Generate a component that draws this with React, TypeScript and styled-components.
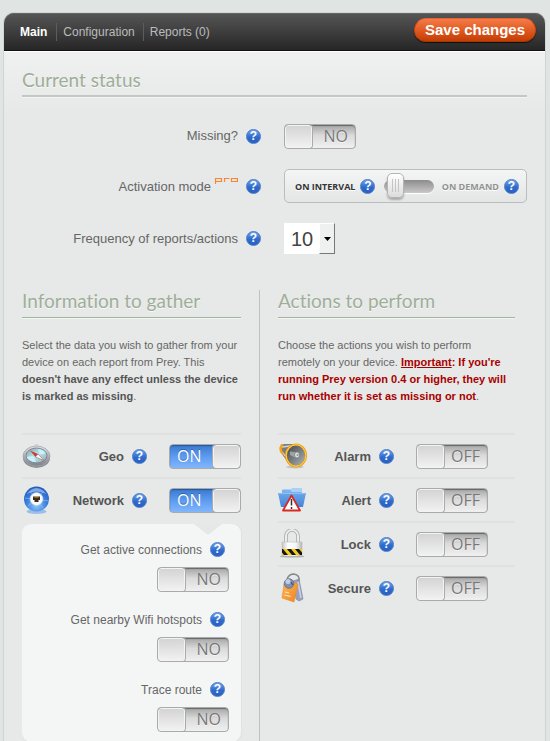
import React, { useState } from "react";
import styled, { createGlobalStyle, css } from "styled-components";

const GlobalStyle = createGlobalStyle`
  *, *::before, *::after { box-sizing: border-box; }
  html, body { margin: 0; padding: 0; }
  body {
    background: #e0e4e3;
    color: #666;
    font-family: "Liberation Sans", Arial, sans-serif;
    font-size: 12px;
  }
  h2, p, ul { margin: 0; padding: 0; }
  ul { list-style: none; }
  button, input, select { font: inherit; margin: 0; }
`;

const Page = styled.div`
  display: flex;
  min-height: 100vh;
  padding: 13px 5px 0 4px;
`;

const Panel = styled.main`
  display: flex;
  flex: 1;
  flex-direction: column;
  min-width: 0;
  border-radius: 10px 10px 0 0;
  background: #e7e9e8;
  box-shadow: 0 0 0 1px #d0d6d4;
`;

const Toolbar = styled.header`
  display: flex;
  align-items: center;
  justify-content: space-between;
  height: 38px;
  padding: 0 9px 0 16px;
  border-bottom: 1px solid #111;
  border-radius: 10px 10px 0 0;
  background: linear-gradient(#565656, #262626);
  box-shadow: inset 0 1px #666;
`;

const Tabs = styled.nav`
  display: flex;
  align-items: center;
`;

const Tab = styled.a<{ $current?: boolean }>`
  padding: 0 8px 0 6px;
  color: ${(p) => (p.$current ? "#fff" : "#bbb")};
  font-weight: ${(p) => (p.$current ? 700 : 400)};
  line-height: 18px;
  text-decoration: none;
  white-space: nowrap;

  &:first-child { padding: 0 9px 0 0; }
  & + & { border-left: 1px solid #5c5c5c; }
`;

const SaveButton = styled.button`
  height: 24px;
  margin-bottom: 4px;
  padding: 0 10px;
  border: 1px solid;
  border-color: #e8622c #c14612 #a83603;
  border-radius: 12px;
  background: linear-gradient(#f57c48, #e05a22 50%, #c33e04);
  box-shadow: 0 1px 1px #111;
  color: #fff;
  font-size: 15px;
  font-weight: 700;
  line-height: 20px;
  white-space: nowrap;
  cursor: pointer;
`;

const Body = styled.div`
  display: flex;
  flex: 1;
  flex-direction: column;
  padding: 17px 18px 0;
  border-top: 1px solid #fff;
  background: linear-gradient(#eff1f0, #e7e9e8 60px);
`;

const SectionTitle = styled.h2<{ $strong?: boolean }>`
  padding-bottom: ${(p) => (p.$strong ? 4 : 5)}px;
  border-bottom: ${(p) => (p.$strong ? "2px solid #c2c8c2" : "1px solid #a3b59f")};
  color: #9fae99;
  font-family: Lato, "Open Sans", sans-serif;
  font-size: 19px;
  font-variant-ligatures: none;
  font-weight: 400;
  line-height: 22px;
  text-shadow: 0 1px #f7f9f8;
  box-shadow: 0 1px #f3f5f4;
`;

const StatusRow = styled.div`
  display: grid;
  grid-template-columns: 1fr 1fr;
  align-items: center;
  gap: 19px;
`;

const StatusList = styled.div`
  display: grid;
  grid-template-rows: 26px 34px 30px;
  gap: 20px;
  padding: 26px 0 37px;
`;

const LabelCell = styled.div`
  display: flex;
  align-items: center;
  justify-content: flex-end;
  gap: 8px;
  padding-right: 4px;
`;

const StatusLabel = styled.label`
  font-size: 13px;
  line-height: 16px;
  white-space: nowrap;
`;

const ProBadge = styled.svg`
  width: 24px;
  height: 7px;
  margin-left: 3px;
  vertical-align: 7px;
`;

const Help = styled.button`
  flex: none;
  width: 15px;
  height: 15px;
  padding: 0;
  border: 1px solid #4479c9;
  border-radius: 50%;
  background: linear-gradient(#72a4e8, #2f6bcd 55%, #2860c0);
  color: #fff;
  font-family: "Liberation Sans", Arial, sans-serif;
  font-size: 12px;
  font-weight: 700;
  line-height: 13px;
  text-align: center;
  text-shadow: none;
  cursor: pointer;
`;

const Switch = styled.label`
  position: relative;
  display: block;
  flex: none;
  width: 72px;
  height: 25px;
  cursor: pointer;
`;

const SwitchInput = styled.input`
  position: absolute;
  inset: 0;
  width: 100%;
  height: 100%;
  opacity: 0;
  cursor: pointer;
`;

const SwitchTrack = styled.span<{ $on: boolean }>`
  display: flex;
  flex-direction: ${(p) => (p.$on ? "row-reverse" : "row")};
  height: 100%;
  overflow: hidden;
  border: 1px solid #a9abaa;
  border-radius: 4px;
  font-family: "Open Sans", sans-serif;
  font-size: 16px;
  font-weight: 500;
  line-height: 23px;
  ${(p) =>
    p.$on
      ? css`
          background: linear-gradient(#3a78ce, #5c9cf0 50%, #82b6fc);
          box-shadow: inset 0 1px 1px #24579e;
          color: #fff;
          text-shadow: 0 -1px #2c62ac;
        `
      : css`
          background: linear-gradient(#a4a4a4, #dadada 45%, #f0f0f0);
          box-shadow: inset 0 1px 1px #666;
          color: #777;
          text-shadow: 0 1px #f5f5f5;
        `}
`;

const SwitchKnob = styled.span`
  flex: none;
  width: 27px;
  border: 1px solid #f3f3f3;
  border-radius: 3px;
  background: linear-gradient(#d4d4d4, #e4e4e4 55%, #f1f1f1);
  box-shadow: 0 0 0 1px #a9abaa;
`;

const SwitchText = styled.span<{ $end: boolean }>`
  flex: 1;
  padding: 0 7px;
  text-align: ${(p) => (p.$end ? "right" : "left")};
`;

const ModeBox = styled.div`
  display: flex;
  align-items: center;
  justify-content: space-between;
  height: 34px;
  padding: 0 7px 0 10px;
  border: 1px solid #babdbb;
  border-radius: 5px;
  background: linear-gradient(#f4f5f5, #e3e6e5);
`;

const ModeOption = styled.span<{ $active?: boolean }>`
  display: flex;
  align-items: center;
  gap: 5px;
  color: ${(p) => (p.$active ? "#333" : "#929292")};
  font-family: "Open Sans", sans-serif;
  font-size: 9px;
  font-weight: 700;
  text-transform: uppercase;
  text-shadow: 0 1px #fff;
  white-space: nowrap;
`;

const thumb = css`
  width: 17px;
  height: 25px;
  border: 1px solid #b4b4b4;
  border-radius: 5px;
  background:
    linear-gradient(#c4c4c4, #c4c4c4) 4px 5px / 1px 13px no-repeat,
    linear-gradient(#c4c4c4, #c4c4c4) 7px 5px / 1px 13px no-repeat,
    linear-gradient(#c4c4c4, #c4c4c4) 10px 5px / 1px 13px no-repeat,
    linear-gradient(#fff, #dcdcdc);
  box-shadow: 0 2px 2px #aaa;
`;

const ModeSlider = styled.input`
  appearance: none;
  width: 50px;
  height: 25px;
  background: transparent;
  cursor: pointer;

  &::-webkit-slider-runnable-track {
    height: 13px;
    padding: 0 3px;
    border-radius: 7px;
    background: linear-gradient(#8c8c8c, #c9c9c9);
    box-shadow: 0 1px #fff;
  }
  &::-webkit-slider-thumb {
    appearance: none;
    margin-top: -7px;
    ${thumb}
  }
  &::-moz-range-track {
    height: 13px;
    border-radius: 7px;
    background: linear-gradient(#8c8c8c, #c9c9c9);
  }
  &::-moz-range-thumb { ${thumb} }
`;

const SelectBox = styled.div`
  position: relative;
  width: 51px;
  height: 31px;
`;

const Select = styled.select`
  appearance: none;
  width: 100%;
  height: 100%;
  padding: 0 0 0 7px;
  border: 0;
  border-radius: 0;
  background: #fff;
  color: #444;
  font-size: 20px;
`;

const SelectArrow = styled.span`
  position: absolute;
  top: 0;
  right: 0;
  display: grid;
  place-items: center;
  width: 16px;
  height: 31px;
  border: 1px solid;
  border-color: #fff #777 #777 #fff;
  background: #eff0f0;
  pointer-events: none;
`;

const Columns = styled.div`
  display: grid;
  flex: 1;
  grid-template-columns: minmax(0, 238fr) minmax(0, 267fr);
`;

const Column = styled.section<{ $first?: boolean }>`
  ${(p) =>
    p.$first
      ? css`
          padding-right: 18px;
          border-right: 1px solid #bcc2c0;
        `
      : css`
          padding: 0 12px 0 18px;
        `}
`;

const Intro = styled.p`
  min-height: 68px;
  margin: 19px 0 28px;
  font-size: 11px;
  line-height: 17px;

  strong { color: #555; }
`;

const Warning = styled.strong`
  && { color: #a90000; }
  u { text-underline-offset: 1px; }
`;

const ModuleRow = styled.li<{ $inset?: boolean }>`
  display: flex;
  align-items: center;
  height: 44px;
  padding-right: ${(p) => (p.$inset ? 27 : 0)}px;
  border-top: 2px solid #dee1e0;
`;

const ModuleIcon = styled.svg`
  flex: none;
  width: 30px;
  height: 30px;
`;

const ModuleLabel = styled.label`
  flex: 1;
  margin-right: 8px;
  color: #555;
  font-size: 13px;
  font-weight: 700;
  text-align: right;
`;

const SwitchSlot = styled.div`
  margin-left: 22px;
`;

const SubBox = styled.ul`
  position: relative;
  display: grid;
  gap: 19px;
  margin-top: 3px;
  padding: 17px 12px 10px;
  border-radius: 9px;
  background: #f4f6f5;
  box-shadow: 0 1px #dde0df, 1px 0 #dfe2e1;

  &::before {
    content: "";
    position: absolute;
    top: 0;
    right: 19px;
    border: solid transparent;
    border-width: 11px 14px 0;
    border-top-color: #e5e8e7;
  }
`;

const SubItem = styled.li`
  display: grid;
  justify-items: end;
  gap: 9px;
`;

const SubLabel = styled.div`
  display: flex;
  align-items: center;
  gap: 8px;
  height: 17px;
  padding-right: 4px;
  font-size: 12px;
`;

function HelpButton({ topic }: { topic: string }) {
  return (
    <Help type="button" aria-label={`Help: ${topic}`}>
      ?
    </Help>
  );
}

type ToggleProps = { id: string; initial?: boolean; onText?: string; offText?: string };

function Toggle({ id, initial = false, onText = "ON", offText = "OFF" }: ToggleProps) {
  const [on, setOn] = useState(initial);
  return (
    <Switch>
      <SwitchInput id={id} type="checkbox" checked={on} onChange={(e) => setOn(e.target.checked)} />
      <SwitchTrack $on={on}>
        <SwitchKnob />
        <SwitchText $end={!on}>{on ? onText : offText}</SwitchText>
      </SwitchTrack>
    </Switch>
  );
}

function CompassIcon() {
  return (
    <ModuleIcon viewBox="0 0 30 30" aria-hidden="true">
      <defs>
        <linearGradient id="rim" x1="0" y1="0" x2="0" y2="1">
          <stop offset="0" stopColor="#dfe2e7" />
          <stop offset="1" stopColor="#7d8289" />
        </linearGradient>
        <linearGradient id="dial" x1="0" y1="0" x2="1" y2="1">
          <stop offset="0" stopColor="#87979f" />
          <stop offset=".5" stopColor="#bde6f0" />
          <stop offset="1" stopColor="#8ba0a6" />
        </linearGradient>
      </defs>
      <circle cx="14.500" cy="5" r="1.500" fill="none" stroke="#c3c6cb" />
      <ellipse cx="14.500" cy="17" rx="13.500" ry="10" fill="#8c9097" />
      <ellipse cx="14.500" cy="15" rx="13.500" ry="10" fill="url(#rim)" stroke="#9ea2a8" strokeWidth=".7" />
      <ellipse cx="14.500" cy="14.500" rx="10.500" ry="7.500" fill="url(#dial)" stroke="#737a80" strokeWidth=".8" />
      <path d="M4.500 16 Q8 21 14 21 L11 15Z M16 8 Q22 9 23 13 L18 13Z" fill="#c5f4fc" />
      <path d="M8 9.500 L16 13 L13.500 16Z" fill="#cf3a36" />
      <path d="M22 19.500 L16 13 L13.500 16Z" fill="#fff" stroke="#a85a5a" strokeWidth=".6" />
    </ModuleIcon>
  );
}

function NetworkIcon() {
  return (
    <ModuleIcon viewBox="0 0 30 30" aria-hidden="true">
      <defs>
        <radialGradient id="globe" cx=".5" cy=".75" r=".75">
          <stop offset="0" stopColor="#8fcbfc" />
          <stop offset=".55" stopColor="#3a7edc" />
          <stop offset="1" stopColor="#2459ba" />
        </radialGradient>
      </defs>
      <ellipse cx="14.500" cy="26.500" rx="10" ry="2.500" fill="#9dbdea" />
      <circle cx="14.500" cy="14" r="12.500" fill="url(#globe)" />
      <path d="M4.500 9 Q14.500 -3 24.500 9 Q14.500 4 4.500 9Z" fill="#b5d4fa" opacity=".6" />
      <path d="M3 13 L27 16 M6 21 L22 6 M8 6 L21 23" stroke="#a8d0fb" strokeWidth=".5" />
      <circle cx="14.500" cy="14" r="6.500" fill="#f8fafc" stroke="#b6c7dc" strokeWidth=".6" />
      <path d="M11 11.500h7v3.500h-1.500v2h-4v-2H11z" fill="#3a2d20" />
      <path d="M12.500 12h4" stroke="#d9a73d" />
    </ModuleIcon>
  );
}

function AlarmIcon() {
  return (
    <ModuleIcon viewBox="0 0 30 30" aria-hidden="true">
      <defs>
        <linearGradient id="horn" x1="0" y1="0" x2="1" y2="1">
          <stop offset="0" stopColor="#3f4345" />
          <stop offset=".6" stopColor="#83888a" />
          <stop offset="1" stopColor="#b7bcbd" />
        </linearGradient>
      </defs>
      <ellipse cx="17" cy="26" rx="9" ry="1.500" fill="#c3c6c5" />
      <path d="M3 3 L17 3 L12 24 L6 16 Q1 11 3 3Z" fill="#777d81" />
      <path d="M4 6 L16 4.500 M4 11 L10 18" stroke="#d3d6d8" strokeWidth="1.500" />
      <path d="M3.500 3 Q-1 8 3.500 13 Q5.500 15 6.500 14 Q1.500 8 6 3Z" fill="#f2a51c" />
      <ellipse cx="18" cy="14.500" rx="10" ry="11" fill="url(#horn)" stroke="#ef9c10" strokeWidth="2" />
      <ellipse cx="18" cy="14.500" rx="9.800" ry="10.800" fill="none" stroke="#ffdf55" strokeWidth=".8" />
      <path d="M12 10.500 L20 11.500 L18 17 L12 14Z" fill="#9ea4a5" />
      <ellipse cx="19" cy="14" rx="2.500" ry="3" fill="#dfe2e3" stroke="#777c7e" strokeWidth=".8" />
      <circle cx="19.500" cy="14" r="1" fill="#8d9294" />
    </ModuleIcon>
  );
}

function AlertIcon() {
  return (
    <ModuleIcon viewBox="0 0 30 30" aria-hidden="true">
      <defs>
        <linearGradient id="folder" x1="0" y1="0" x2="0" y2="1">
          <stop offset="0" stopColor="#6ba6ea" />
          <stop offset="1" stopColor="#4485d6" />
        </linearGradient>
      </defs>
      <path d="M4 20V5l1-1h8l1-1h10v17z" fill="#a9d0f8" />
      <path d="M4 5h8l2 2h10v3H4z" fill="#7cb2ef" />
      <path d="M0 8h28l-3 14H3z" fill="url(#folder)" />
      <path d="M1 8.500h26" stroke="#8dbff5" />
      <path d="M13.500 10.500 L22 25.500H5Z" fill="#fff" stroke="#d92822" strokeWidth="1.800" strokeLinejoin="round" />
      <path d="M13.500 14v6.500M13.500 22v2" stroke="#333" strokeWidth="1.500" />
    </ModuleIcon>
  );
}

function LockIcon() {
  return (
    <ModuleIcon viewBox="0 0 30 30" aria-hidden="true">
      <defs>
        <linearGradient id="steel">
          <stop offset="0" stopColor="#c3c5c6" />
          <stop offset=".3" stopColor="#fff" />
          <stop offset=".7" stopColor="#f4f5f5" />
          <stop offset="1" stopColor="#b3b6b7" />
        </linearGradient>
        <clipPath id="band"><path d="M4 20h20v6H4z" /></clipPath>
      </defs>
      <ellipse cx="14" cy="27.500" rx="12.500" ry="1" fill="#aeb1b0" />
      <path d="M8 15V7a6 6 0 0 1 12 0v8" fill="none" stroke="#a3a6a7" strokeWidth="3.500" />
      <path d="M8 15V7a6 6 0 0 1 12 0v8" fill="none" stroke="#eceeee" strokeWidth="2" />
      <path d="M4 13h20v14H4z" fill="url(#steel)" stroke="#b0b3b3" strokeWidth=".5" />
      <path d="M4 20h20v6H4z" fill="#f7c91b" />
      <path clipPath="url(#band)" d="M1 20h4l5 6H6zM9 20h4l5 6h-4zM17 20h4l5 6h-4z" fill="#171611" />
    </ModuleIcon>
  );
}

function SecureIcon() {
  return (
    <ModuleIcon viewBox="0 0 30 30" aria-hidden="true">
      <defs>
        <linearGradient id="tag" x1="0" y1="0" x2="1" y2="1">
          <stop offset="0" stopColor="#ffb858" />
          <stop offset="1" stopColor="#ee8420" />
        </linearGradient>
      </defs>
      <path d="M15 8 L21 6 L25 26 L21 28 L18 26Z" fill="#9aa1bd" stroke="#7b82a2" strokeWidth=".6" />
      <path d="M20 9l3 16" stroke="#cdd2e3" strokeWidth="1.500" />
      <path d="M6 11 L11 8 L20 11 L16 29 L4 25Z" fill="url(#tag)" stroke="#e58d30" strokeWidth=".6" />
      <path d="M7 19l4 1M6.500 22l6 1.500" stroke="#ffe3b5" strokeWidth="1.200" />
      <path d="M9 6 Q11 1 16 1 Q22 2 21 8" fill="none" stroke="#85898a" strokeWidth="1.500" />
      <circle cx="11" cy="10.500" r="4.800" fill="#7f8fb0" stroke="#5f6d8c" strokeWidth=".8" />
      <circle cx="10" cy="8.500" r="2.500" fill="#c3cee2" />
      <path d="M13 9l2 3" stroke="#46526e" strokeWidth="1.200" />
    </ModuleIcon>
  );
}

type Module = { id: string; name: string; Icon: () => React.JSX.Element; on?: boolean };

const gatherModules: Module[] = [
  { id: "geo", name: "Geo", Icon: CompassIcon, on: true },
  { id: "network", name: "Network", Icon: NetworkIcon, on: true },
];

const actionModules: Module[] = [
  { id: "alarm", name: "Alarm", Icon: AlarmIcon },
  { id: "alert", name: "Alert", Icon: AlertIcon },
  { id: "lock", name: "Lock", Icon: LockIcon },
  { id: "secure", name: "Secure", Icon: SecureIcon },
];

const networkOptions = [
  { id: "connections", name: "Get active connections" },
  { id: "wifi", name: "Get nearby Wifi hotspots" },
  { id: "trace", name: "Trace route" },
];

function ModuleList({ modules, inset }: { modules: Module[]; inset?: boolean }) {
  return (
    <ul>
      {modules.map(({ id, name, Icon, on }) => (
        <ModuleRow key={id} $inset={inset}>
          <Icon />
          <ModuleLabel htmlFor={id}>{name}</ModuleLabel>
          <HelpButton topic={name} />
          <SwitchSlot>
            <Toggle id={id} initial={on} />
          </SwitchSlot>
        </ModuleRow>
      ))}
    </ul>
  );
}

export default function App() {
  const [mode, setMode] = useState(0);
  return (
    <>
      <GlobalStyle />
      <Page>
        <Panel>
          <Toolbar>
            <Tabs>
              <Tab href="#main" $current>Main</Tab>
              <Tab href="#configuration">Configuration</Tab>
              <Tab href="#reports">Reports (0)</Tab>
            </Tabs>
            <SaveButton type="button">Save changes</SaveButton>
          </Toolbar>
          <Body>
            <SectionTitle $strong>Current status</SectionTitle>
            <StatusList>
              <StatusRow>
                <LabelCell>
                  <StatusLabel htmlFor="missing">Missing?</StatusLabel>
                  <HelpButton topic="Missing" />
                </LabelCell>
                <Toggle id="missing" onText="YES" offText="NO" />
              </StatusRow>
              <StatusRow>
                <LabelCell>
                  <StatusLabel htmlFor="mode">
                    Activation mode
                    <ProBadge viewBox="0 0 24 7" role="img" aria-label="pro">
                      <path d="M1.500 7V1.500h6v3h-6M10.500 5V1.500h5M17.500 1.500h6v3h-6z" fill="none" stroke="#fb8535" strokeWidth="1.200" />
                    </ProBadge>
                  </StatusLabel>
                  <HelpButton topic="Activation mode" />
                </LabelCell>
                <ModeBox>
                  <ModeOption $active={mode === 0}>
                    On interval
                    <HelpButton topic="On interval" />
                  </ModeOption>
                  <ModeSlider
                    id="mode"
                    type="range"
                    min={0}
                    max={1}
                    value={mode}
                    onChange={(e) => setMode(Number(e.target.value))}
                  />
                  <ModeOption $active={mode === 1}>
                    On demand
                    <HelpButton topic="On demand" />
                  </ModeOption>
                </ModeBox>
              </StatusRow>
              <StatusRow>
                <LabelCell>
                  <StatusLabel htmlFor="frequency">Frequency of reports/actions</StatusLabel>
                  <HelpButton topic="Frequency" />
                </LabelCell>
                <SelectBox>
                  <Select id="frequency" defaultValue="10">
                    <option>10</option>
                    <option>20</option>
                    <option>30</option>
                  </Select>
                  <SelectArrow>
                    <svg width="7" height="4" viewBox="0 0 7 4" aria-hidden="true">
                      <path d="M0 0h7L3.500 4z" fill="#000" />
                    </svg>
                  </SelectArrow>
                </SelectBox>
              </StatusRow>
            </StatusList>
            <Columns>
              <Column $first>
                <SectionTitle>Information to gather</SectionTitle>
                <Intro>
                  Select the data you wish to gather from your device on each report from Prey. This{" "}
                  <strong>doesn't have any effect unless the device is marked as missing</strong>.
                </Intro>
                <ModuleList modules={gatherModules} />
                <SubBox>
                  {networkOptions.map(({ id, name }) => (
                    <SubItem key={id}>
                      <SubLabel>
                        <label htmlFor={id}>{name}</label>
                        <HelpButton topic={name} />
                      </SubLabel>
                      <Toggle id={id} onText="YES" offText="NO" />
                    </SubItem>
                  ))}
                </SubBox>
              </Column>
              <Column>
                <SectionTitle>Actions to perform</SectionTitle>
                <Intro>
                  Choose the actions you wish to perform remotely on your device.{" "}
                  <Warning>
                    <u>Important</u>: If you're running Prey version 0.4 or higher, they will run whether it is set as
                    missing or not
                  </Warning>
                  .
                </Intro>
                <ModuleList modules={actionModules} inset />
              </Column>
            </Columns>
          </Body>
        </Panel>
      </Page>
    </>
  );
}
